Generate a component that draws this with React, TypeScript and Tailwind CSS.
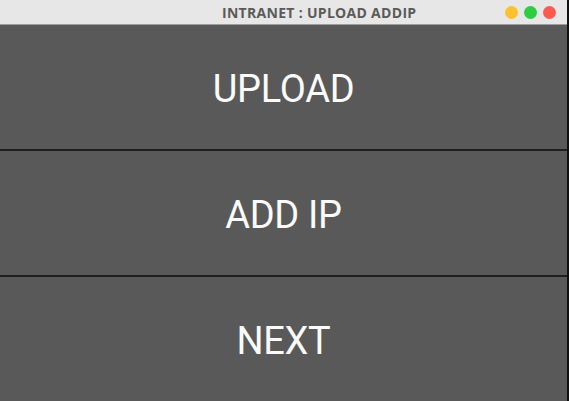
import React from "react";

const Btn = ({ label, last }: { label: string; last?: boolean }) => (
  <button
    className={
      "flex-1 flex items-center justify-center bg-[#595959] text-[#fafafa] text-[38px] tracking-[-0.3px] pt-[5px] " +
      (last ? "" : "border-b-2 border-[#1f1f1f]")
    }
    style={{ fontFamily: "Roboto, 'Noto Sans', sans-serif" }}
  >
    {label}
  </button>
);

export default function App() {
  return (
    <div className="w-[569px] h-[401px] flex flex-col overflow-hidden border-r-2 border-[#111]">
      <div className="h-[25px] shrink-0 flex items-center bg-[#e7e7e7] border-b border-[#9c9c9c]">
        <div className="w-[222px] shrink-0" />
        <div
          className="text-[14px] font-bold text-[#5a5a5a] tracking-[0.3px]"
          style={{ fontFamily: "'Open Sans', 'Noto Sans', sans-serif" }}
        >
          INTRANET : UPLOAD ADDIP
        </div>
        <div className="flex-1" />
        <div className="flex gap-[6px] pr-[11px]">
          <span className="w-[13px] h-[13px] rounded-full bg-[#fdc02f]" />
          <span className="w-[13px] h-[13px] rounded-full bg-[#2ecc40]" />
          <span className="w-[13px] h-[13px] rounded-full bg-[#fa5a50]" />
        </div>
      </div>
      <div className="flex-1 flex flex-col">
        <Btn label="UPLOAD" />
        <Btn label="ADD IP" />
        <Btn label="NEXT" last />
      </div>
    </div>
  );
}
